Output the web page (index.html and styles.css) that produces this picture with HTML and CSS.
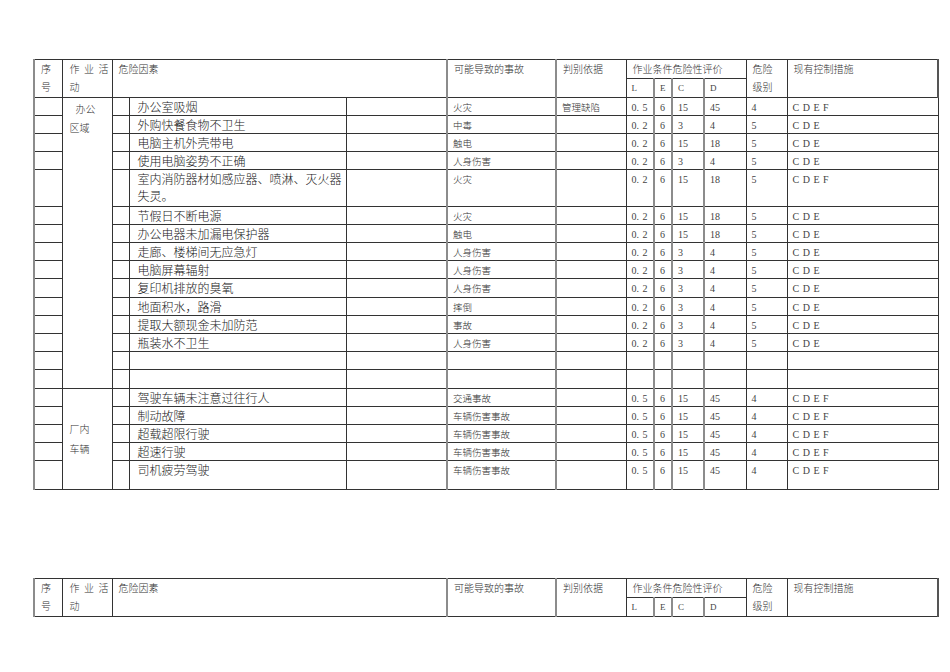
FILE: index.html
```
<!DOCTYPE html>
<html lang="zh">
<head>
<meta charset="utf-8">
<link rel="stylesheet" href="styles.css">
</head>
<body>
<div class="page">
<table class="risk">
<colgroup>
<col class="c1 g"><col class="c2"><col class="c3"><col class="c4"><col class="c5"><col class="c6 g"><col class="c7 g"><col class="c8"><col class="c9 g"><col class="c10 g"><col class="c11 g"><col class="c12"><col class="c13">
</colgroup>
<thead>
<tr class="h">
<th rowspan="2">序<br>号</th>
<th rowspan="2" class="sp">作业活<br>动</th>
<th rowspan="2" colspan="3">危险因素</th>
<th rowspan="2">可能导致的事故</th>
<th rowspan="2">判别依据</th>
<th colspan="4">作业条件危险性评价</th>
<th rowspan="2">危险<br>级别</th>
<th rowspan="2" class="rt">现有控制措施</th>
</tr>
<tr class="h">
<th class="l">L</th><th class="l">E</th><th class="l">C</th><th class="l">D</th>
</tr>
</thead>
<tbody>
<tr class="r"><td></td><td rowspan="15" class="act ind">办公<br>区域</td><td></td><td class="hz">办公室吸烟</td><td></td><td class="s">火灾</td><td class="s">管理缺陷</td><td class="n">0. 5</td><td class="n">6</td><td class="n">15</td><td class="n">45</td><td class="n">4</td><td class="n">C D E F</td></tr>
<tr class="r"><td></td><td></td><td class="hz">外购快餐食物不卫生</td><td></td><td class="s">中毒</td><td class="s"></td><td class="n">0. 2</td><td class="n">6</td><td class="n">3</td><td class="n">4</td><td class="n">5</td><td class="n">C D E</td></tr>
<tr class="r"><td></td><td></td><td class="hz">电脑主机外壳带电</td><td></td><td class="s">触电</td><td class="s"></td><td class="n">0. 2</td><td class="n">6</td><td class="n">15</td><td class="n">18</td><td class="n">5</td><td class="n">C D E</td></tr>
<tr class="r"><td></td><td></td><td class="hz">使用电脑姿势不正确</td><td></td><td class="s">人身伤害</td><td class="s"></td><td class="n">0. 2</td><td class="n">6</td><td class="n">3</td><td class="n">4</td><td class="n">5</td><td class="n">C D E</td></tr>
<tr class="tall"><td></td><td></td><td class="hz">室内消防器材如感应器、喷淋、灭火器<br>失灵。</td><td></td><td class="s">火灾</td><td class="s"></td><td class="n">0. 2</td><td class="n">6</td><td class="n">15</td><td class="n">18</td><td class="n">5</td><td class="n">C D E F</td></tr>
<tr class="r"><td></td><td></td><td class="hz">节假日不断电源</td><td></td><td class="s">火灾</td><td class="s"></td><td class="n">0. 2</td><td class="n">6</td><td class="n">15</td><td class="n">18</td><td class="n">5</td><td class="n">C D E</td></tr>
<tr class="r"><td></td><td></td><td class="hz">办公电器未加漏电保护器</td><td></td><td class="s">触电</td><td class="s"></td><td class="n">0. 2</td><td class="n">6</td><td class="n">15</td><td class="n">18</td><td class="n">5</td><td class="n">C D E</td></tr>
<tr class="r"><td></td><td></td><td class="hz">走廊、楼梯间无应急灯</td><td></td><td class="s">人身伤害</td><td class="s"></td><td class="n">0. 2</td><td class="n">6</td><td class="n">3</td><td class="n">4</td><td class="n">5</td><td class="n">C D E</td></tr>
<tr class="r"><td></td><td></td><td class="hz">电脑屏幕辐射</td><td></td><td class="s">人身伤害</td><td class="s"></td><td class="n">0. 2</td><td class="n">6</td><td class="n">3</td><td class="n">4</td><td class="n">5</td><td class="n">C D E</td></tr>
<tr class="r"><td></td><td></td><td class="hz">复印机排放的臭氧</td><td></td><td class="s">人身伤害</td><td class="s"></td><td class="n">0. 2</td><td class="n">6</td><td class="n">3</td><td class="n">4</td><td class="n">5</td><td class="n">C D E</td></tr>
<tr class="r"><td></td><td></td><td class="hz">地面积水，路滑</td><td></td><td class="s">摔倒</td><td class="s"></td><td class="n">0. 2</td><td class="n">6</td><td class="n">3</td><td class="n">4</td><td class="n">5</td><td class="n">C D E</td></tr>
<tr class="r"><td></td><td></td><td class="hz">提取大额现金未加防范</td><td></td><td class="s">事故</td><td class="s"></td><td class="n">0. 2</td><td class="n">6</td><td class="n">3</td><td class="n">4</td><td class="n">5</td><td class="n">C D E</td></tr>
<tr class="r"><td></td><td></td><td class="hz">瓶装水不卫生</td><td></td><td class="s">人身伤害</td><td class="s"></td><td class="n">0. 2</td><td class="n">6</td><td class="n">3</td><td class="n">4</td><td class="n">5</td><td class="n">C D E</td></tr>
<tr class="r"><td></td><td></td><td></td><td></td><td></td><td></td><td></td><td></td><td></td><td></td><td></td><td></td></tr>
<tr class="r"><td></td><td></td><td></td><td></td><td></td><td></td><td></td><td></td><td></td><td></td><td></td><td></td></tr>
<tr class="r"><td></td><td rowspan="5" class="act mid">厂内<br>车辆</td><td></td><td class="hz">驾驶车辆未注意过往行人</td><td></td><td class="s">交通事故</td><td class="s"></td><td class="n">0. 5</td><td class="n">6</td><td class="n">15</td><td class="n">45</td><td class="n">4</td><td class="n">C D E F</td></tr>
<tr class="r"><td></td><td></td><td class="hz">制动故障</td><td></td><td class="s">车辆伤害事故</td><td class="s"></td><td class="n">0. 5</td><td class="n">6</td><td class="n">15</td><td class="n">45</td><td class="n">4</td><td class="n">C D E F</td></tr>
<tr class="r"><td></td><td></td><td class="hz">超载超限行驶</td><td></td><td class="s">车辆伤害事故</td><td class="s"></td><td class="n">0. 5</td><td class="n">6</td><td class="n">15</td><td class="n">45</td><td class="n">4</td><td class="n">C D E F</td></tr>
<tr class="r"><td></td><td></td><td class="hz">超速行驶</td><td></td><td class="s">车辆伤害事故</td><td class="s"></td><td class="n">0. 5</td><td class="n">6</td><td class="n">15</td><td class="n">45</td><td class="n">4</td><td class="n">C D E F</td></tr>
<tr class="last"><td></td><td></td><td class="hz">司机疲劳驾驶</td><td></td><td class="s">车辆伤害事故</td><td class="s"></td><td class="n">0. 5</td><td class="n">6</td><td class="n">15</td><td class="n">45</td><td class="n">4</td><td class="n">C D E F</td></tr>
</tbody>
</table>

<table class="risk second">
<colgroup>
<col class="c1 g"><col class="c2"><col class="c3"><col class="c4"><col class="c5"><col class="c6 g"><col class="c7 g"><col class="c8"><col class="c9 g"><col class="c10 g"><col class="c11 g"><col class="c12"><col class="c13">
</colgroup>
<thead>
<tr class="h">
<th rowspan="2">序<br>号</th>
<th rowspan="2" class="sp">作业活<br>动</th>
<th rowspan="2" colspan="3">危险因素</th>
<th rowspan="2">可能导致的事故</th>
<th rowspan="2">判别依据</th>
<th colspan="4">作业条件危险性评价</th>
<th rowspan="2">危险<br>级别</th>
<th rowspan="2" class="rt">现有控制措施</th>
</tr>
<tr class="h">
<th class="l">L</th><th class="l">E</th><th class="l">C</th><th class="l">D</th>
</tr>
</thead>
</table>
</div>
</body>
</html>
```
FILE: styles.css
```
html, body {
  margin: 0;
  padding: 0;
  background: #ffffff;
}
body {
  font-family: "Noto Sans CJK SC", sans-serif;
  font-weight: 300;
  color: #222222;
}
.page {
  padding: 59px 0 0 33px;
}
.risk {
  border-collapse: collapse;
  table-layout: fixed;
  width: 904px;
}
.second {
  margin-top: 88px;
}
.c1 { width: 28px; }
.c2 { width: 50px; }
.c3 { width: 17px; }
.c4 { width: 217px; }
.c5 { width: 101px; }
.c6 { width: 109px; }
.c7 { width: 70px; }
.c8 { width: 28px; }
.c9 { width: 18px; }
.c10 { width: 32px; }
.c11 { width: 42px; }
.c12 { width: 41px; }
.c13 { width: 151px; }
col.g {
  border-left: 2px solid #8c8c8c;
}
.risk th, .risk td {
  border: 1px solid #333333;
  padding: 0;
  overflow: hidden;
}
.risk th {
  font-weight: 300;
  text-align: left;
  vertical-align: top;
  font-size: 10px;
  line-height: 18px;
  padding: 0 0 0 6px;
  color: #333333;
  white-space: nowrap;
}
.risk th.l {
  font-family: "Liberation Serif", serif;
  font-weight: normal;
  font-size: 9px;
  line-height: 16px;
  padding: 1px 0 0 5px;
  color: #444444;
}
.risk th.sp {
  letter-spacing: 4.5px;
  padding-left: 7px;
}
.risk th.rt {
  border-right: 2px solid #555555;
}
tr.h { height: 18.5px; }
tr.r { height: 18.2px; }
tr.tall { height: 36.4px; }
tr.last { height: 29px; }
.risk td {
  vertical-align: top;
}
.risk td.hz {
  font-size: 12px;
  line-height: 17px;
  padding-left: 8px;
  color: #1a1a1a;
  white-space: nowrap;
}
.risk td.s {
  font-size: 9.5px;
  line-height: 13px;
  padding: 3px 0 0 5px;
  color: #333333;
  white-space: nowrap;
}
.risk td.n {
  font-family: "Liberation Serif", serif;
  font-weight: normal;
  font-size: 10px;
  line-height: 13px;
  padding: 3px 0 0 5px;
  color: #444444;
  white-space: nowrap;
  word-spacing: 1px;
}
.risk td.act {
  font-size: 10px;
  line-height: 19px;
  padding: 1px 0 0 7px;
  color: #333333;
}
.risk td.ind {
  text-indent: 6px;
}
.risk td.mid {
  vertical-align: middle;
  line-height: 20px;
  padding-top: 0;
}
```
